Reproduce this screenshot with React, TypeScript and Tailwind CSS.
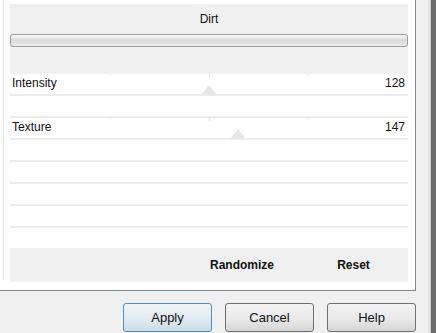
import React from "react";

const font = { fontFamily: '"Liberation Sans", Arial, sans-serif' };

function Row({ label, value, thumb }: { label?: string; value?: string; thumb?: number }) {
  return (
    <div className="relative h-[22px] border-b-2 border-[#ececec] flex items-center justify-between pr-[3px] pl-[2px] text-[12px] text-[#111]">
      <span className="pb-[2px]">{label ?? ""}</span>
      <span className="pb-[2px]">{value ?? ""}</span>
      {thumb !== undefined && (
        <>
          <div className="absolute top-0 w-px h-[3px] bg-[#e4e4e4]" style={{ left: 199 }} />
          <div className="absolute top-0 w-px h-[2px] bg-[#eeeeee]" style={{ left: 100 }} />
          <div className="absolute top-0 w-px h-[2px] bg-[#eeeeee]" style={{ left: 298 }} />
          <svg className="absolute bottom-0" style={{ left: thumb - 7 }} width="14" height="9" viewBox="0 0 14 9">
            <polygon points="7,0 14,9 0,9" fill="#e6e6e6" />
          </svg>
        </>
      )}
    </div>
  );
}

function Btn({ children, primary }: { children: React.ReactNode; primary?: boolean }) {
  return (
    <div
      className={
        "w-[89px] h-[29px] rounded-[3px] border flex items-center justify-center text-[13px] text-[#111] " +
        (primary
          ? "border-[#5a8fb5] bg-gradient-to-b from-[#eef4f8] via-[#e1ebf1] to-[#ccdce6]"
          : "border-[#707070] bg-gradient-to-b from-[#f2f2f2] via-[#ebebeb] to-[#d6d6d6]")
      }
    >
      {children}
    </div>
  );
}

export default function App() {
  return (
    <div className="w-[436px] h-[333px] bg-[#f0f0f0] flex overflow-hidden" style={font}>
      <div className="w-[427px] flex flex-col">
        <div className="w-[416px] h-[291px] bg-white border-r border-b border-[#828790] flex">
          <div className="w-[3px]" />
          <div className="w-px h-[280px] bg-[#e3e3e3]" />
          <div className="w-[6px]" />
          <div className="w-[398px] flex flex-col pt-[4px]">
            <div className="h-[70px] bg-[#f0f0f0] flex flex-col">
              <div className="h-[30px] flex items-center justify-center text-[12px] text-[#111]">Dirt</div>
              <div className="h-[13px] rounded-[3px] border border-[#9c9c9c] bg-gradient-to-b from-[#fbfbfb] via-[#dadada] to-[#ebebeb]" />
            </div>
            <Row label="Intensity" value="128" thumb={199} />
            <Row />
            <Row label="Texture" value="147" thumb={228} />
            <Row />
            <Row />
            <Row />
            <Row />
            <div className="h-[20px]" />
            <div className="h-[34px] bg-[#f0f0f0] flex items-center text-[12px] font-bold text-[#111]">
              <span className="ml-[200px] w-[63px] text-center">Randomize</span>
              <span className="ml-[64px] w-[33px] text-center">Reset</span>
            </div>
          </div>
        </div>
        <div className="flex gap-[13px] pl-[123px] pt-[12px]">
          <Btn primary>Apply</Btn>
          <Btn>Cancel</Btn>
          <Btn>Help</Btn>
        </div>
      </div>
      <div className="w-[1px] bg-[#f0f0f0]" />
      <div className="w-[2px] bg-[#e4e4e4]" />
      <div className="w-[1px] bg-[#d0d0d0]" />
      <div className="flex-1 bg-[#6d6d6d]" />
    </div>
  );
}
